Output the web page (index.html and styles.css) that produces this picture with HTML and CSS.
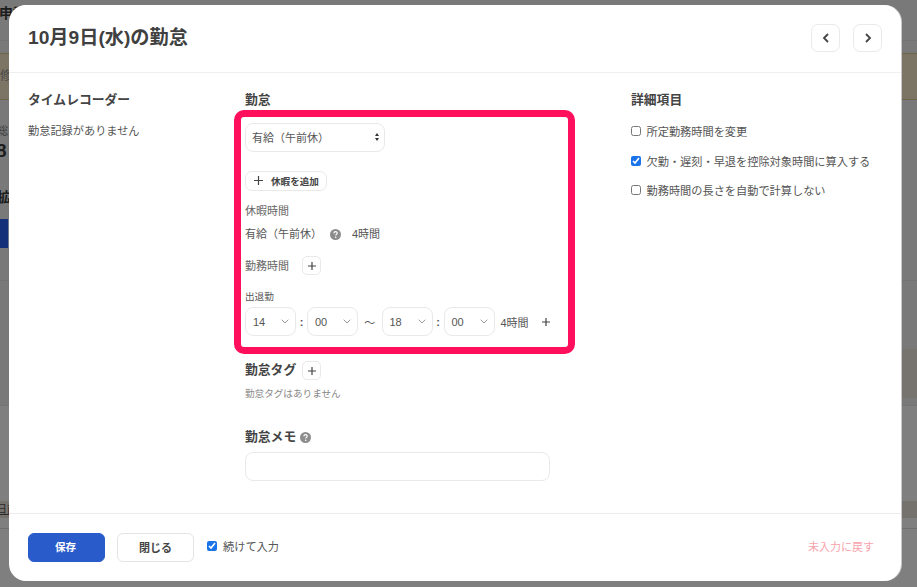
FILE: index.html
```html
<!DOCTYPE html>
<html lang="ja">
<head>
<meta charset="utf-8">
<title>10月9日(水)の勤怠</title>
<link rel="stylesheet" href="styles.css">
</head>
<body>
<div class="backdrop">
  <div class="bd-head">申請</div>
  <div class="bd-banner"><span>修</span></div>
  <div class="bd-label">総</div>
  <div class="bd-num">8</div>
  <div class="bd-sub">拡</div>
  <div class="bd-blue"></div>
  <div class="bd-section"></div>
  <div class="bd-band"></div>
  <div class="bd-lower">
    <div class="bd-row"><span>日前</span></div>
    <div class="bd-rule"></div>
  </div>
</div>

<div class="modal">
  <header class="m-head">
    <h1 class="m-title">10月9日(水)の勤怠</h1>
    <div class="m-nav">
      <button class="nav-btn"><svg width="10" height="12" viewBox="0 0 10 12"><path class="chev-bold" d="M7 2 3 6l4 4"/></svg></button>
      <button class="nav-btn"><svg width="10" height="12" viewBox="0 0 10 12"><path class="chev-bold" d="M3 2l4 4-4 4"/></svg></button>
    </div>
  </header>

  <main class="m-body">
    <section class="col">
      <h2 class="heading">タイムレコーダー</h2>
      <p class="empty-rec">勤怠記録がありません</p>
    </section>

    <section class="col col-main">
      <h2 class="heading">勤怠</h2>
      <div class="select kind">
        <span>有給（午前休）</span>
        <svg width="4" height="8" viewBox="0 0 4 8"><path class="arrows" d="M2 0 4 3H0zM2 8 0 5h4z"/></svg>
      </div>
      <button class="add-leave">
        <svg width="9" height="9" viewBox="0 0 9 9"><path class="plus" d="M4.5 0v9M0 4.5h9"/></svg>
        <span>休暇を追加</span>
      </button>
      <div class="sub-label leave-label">休暇時間</div>
      <div class="leave-row">
        <span>有給（午前休）</span>
        <svg class="help" width="11" height="11" viewBox="0 0 11 11"><circle cx="5.5" cy="5.5" r="5.5" fill="#8c8c8c"/><path d="M3.9 4.3c0-2.1 3.3-2.1 3.3-.1 0 1.2-1.5 1.2-1.5 2.4" fill="none" stroke="#fff" stroke-width="1.2"/><circle cx="5.7" cy="8.3" r=".8" fill="#fff"/></svg>
        <span>4時間</span>
      </div>
      <div class="work-row">
        <span class="sub-label">勤務時間</span>
        <button class="plus-btn"><svg width="8" height="8" viewBox="0 0 8 8"><path class="plus" d="M4 0v8M0 4h8"/></svg></button>
      </div>
      <div class="small-label">出退勤</div>
      <div class="time-row">
        <div class="select time"><span>14</span><svg width="8" height="5" viewBox="0 0 8 5"><path class="chev" d="M.7.7 4 4 7.3.7"/></svg></div>
        <span class="colon">:</span>
        <div class="select time"><span>00</span><svg width="8" height="5" viewBox="0 0 8 5"><path class="chev" d="M.7.7 4 4 7.3.7"/></svg></div>
        <span class="tilde">〜</span>
        <div class="select time"><span>18</span><svg width="8" height="5" viewBox="0 0 8 5"><path class="chev" d="M.7.7 4 4 7.3.7"/></svg></div>
        <span class="colon">:</span>
        <div class="select time"><span>00</span><svg width="8" height="5" viewBox="0 0 8 5"><path class="chev" d="M.7.7 4 4 7.3.7"/></svg></div>
        <span class="hours">4時間</span>
        <svg class="time-plus" width="8" height="8" viewBox="0 0 8 8"><path class="plus" d="M4 0v8M0 4h8"/></svg>
      </div>
      <div class="tag-row">
        <h2 class="heading tag-heading">勤怠タグ</h2>
        <button class="plus-btn"><svg width="8" height="8" viewBox="0 0 8 8"><path class="plus" d="M4 0v8M0 4h8"/></svg></button>
      </div>
      <p class="tag-empty">勤怠タグはありません</p>
      <div class="memo-head">
        <h2 class="heading">勤怠メモ</h2>
        <svg width="11" height="11" viewBox="0 0 11 11"><circle cx="5.5" cy="5.5" r="5.5" fill="#8c8c8c"/><path d="M3.9 4.3c0-2.1 3.3-2.1 3.3-.1 0 1.2-1.5 1.2-1.5 2.4" fill="none" stroke="#fff" stroke-width="1.2"/><circle cx="5.7" cy="8.3" r=".8" fill="#fff"/></svg>
      </div>
      <input class="memo" type="text">
      <div class="annotation"></div>
    </section>

    <section class="col">
      <h2 class="heading">詳細項目</h2>
      <div class="checks">
        <label class="check"><input type="checkbox"><span>所定勤務時間を変更</span></label>
        <label class="check"><input type="checkbox" checked><span>欠勤・遅刻・早退を控除対象時間に算入する</span></label>
        <label class="check"><input type="checkbox"><span>勤務時間の長さを自動で計算しない</span></label>
      </div>
    </section>
  </main>

  <footer class="m-foot">
    <button class="btn primary">保存</button>
    <button class="btn">閉じる</button>
    <label class="check cont"><input type="checkbox" checked><span>続けて入力</span></label>
    <span class="reset">未入力に戻す</span>
  </footer>
</div>
</body>
</html>
```
FILE: styles.css
```css
* { box-sizing: border-box; }
html, body { margin: 0; height: 100%; }
body {
  width: 917px;
  height: 587px;
  overflow: hidden;
  position: relative;
  background: #7f7f7f;
  color: #444;
  font-family: "Liberation Sans", "Noto Sans CJK JP", sans-serif;
  font-size: 11px;
}
h1, h2, p { margin: 0; }
button { font-family: inherit; padding: 0; background: #fff; cursor: pointer; }

/* dimmed page behind the dialog */
.backdrop { height: 587px; overflow: hidden; color: #1c1c1c; background: #797979; }
.bd-head { height: 41px; padding-top: 3px; font-size: 14px; line-height: 20px; font-weight: 700; text-indent: -1px; border-bottom: 1px solid #737373; white-space: nowrap; }
.bd-banner { margin-top: 12px; height: 47px; background: #7c7565; border-top: 1px solid #6f6547; border-bottom: 1px solid #6f6547; color: #4a4a4a; font-size: 12px; line-height: 45px; }
.bd-label { margin-top: 24px; height: 14px; line-height: 14px; font-size: 11px; color: #3a3a3a; text-indent: -3px; }
.bd-num { margin-top: 1px; height: 24px; line-height: 24px; font-size: 19px; font-weight: 700; text-indent: -4px; }
.bd-sub { margin-top: 24px; height: 20px; line-height: 20px; font-size: 14px; font-weight: 700; text-indent: -3px; }
.bd-blue { margin-top: 12px; height: 29px; width: 9px; background: #143078; border-right: 1px solid #6f7a90; }
.bd-section { margin-top: 32px; height: 1px; background: #737373; }
.bd-band { margin-top: 68px; margin-left: 880px; height: 49px; background: #77746f; }
.bd-lower { margin-top: 7px; height: 182px; border-top: 1px solid #757575; background: #7f7f7f; padding-top: 95px; }
.bd-row { height: 17px; background: #75726e; font-size: 11px; color: #2a2a2a; line-height: 17px; text-indent: -4px; }
.bd-row span { text-decoration: underline; }
.bd-rule { margin-top: 10px; height: 1px; background: #6f6f6f; }

/* dialog */
.modal {
  position: absolute;
  top: 5px;
  left: 9px;
  width: 892px;
  height: 576px;
  background: #fff;
  border-radius: 17px;
  box-shadow: 1px 0 0 #c9c9c9;
  display: flex;
  flex-direction: column;
}
.m-head {
  flex: none;
  height: 68px;
  padding: 0 19px;
  border-bottom: 1px solid #f0f0f0;
  display: flex;
  align-items: center;
  justify-content: space-between;
}
.m-title { font-size: 19.2px; font-weight: 700; line-height: 28px; color: #404040; margin-top: -1px; }
.m-nav { display: flex; gap: 13px; margin-top: -1px; }
.nav-btn {
  width: 29px;
  height: 28.5px;
  border: 1px solid #eaeaea;
  border-radius: 7px;
  display: flex;
  align-items: center;
  justify-content: center;
}
.chev-bold { fill: none; stroke: #444; stroke-width: 1.8; }

.m-body {
  flex: 1;
  padding: 18px 19px 0;
  display: grid;
  grid-template-columns: 217px 386px 1fr;
  align-content: start;
}
.col { min-width: 0; position: relative; }
.heading { font-size: 12.8px; line-height: 18px; font-weight: 700; color: #444; }
.tag-heading { padding-bottom: 2px; }
.empty-rec { margin-top: 14px; line-height: 16px; font-size: 11.2px; color: #555; }

.select {
  border: 1px solid #e9e9e9;
  border-radius: 8px;
  background: #fff;
  display: flex;
  align-items: center;
  justify-content: space-between;
  color: #555;
}
.kind { margin-top: 14px; width: 140px; height: 29px; padding: 0 5px 2px 6px; }
.arrows { fill: #333; }
.add-leave {
  margin-top: 19px;
  width: 82px;
  height: 20px;
  border: 1px solid #e9e9e9;
  border-radius: 7px;
  display: flex;
  align-items: center;
  gap: 8px;
  padding: 0 0 1px 8px;
  font-size: 9.6px;
  font-weight: 700;
  color: #444;
}
.plus { fill: none; stroke: #444; stroke-width: 1.2; }
.sub-label { font-size: 11px; line-height: 16px; color: #666; }
.leave-label { margin-top: 12px; }
.leave-row { margin-top: 7px; height: 16px; display: flex; align-items: center; line-height: 16px; color: #555; }
.help { margin-left: 8px; margin-right: 11px; }
.work-row { margin-top: 14px; height: 19px; display: flex; align-items: center; gap: 13px; }
.plus-btn {
  width: 19px;
  height: 19px;
  border: 1px solid #e9e9e9;
  border-radius: 5px;
  display: flex;
  align-items: center;
  justify-content: center;
}
.small-label { margin-top: 15px; font-size: 9.6px; line-height: 14px; color: #555; }
.time-row { margin-top: 3px; height: 29px; display: flex; align-items: center; }
.time { width: 51px; height: 29px; padding: 0 6px 0 7px; flex: none; }
.chev { fill: none; stroke: #999; stroke-width: 1; }
.colon { width: 11px; text-align: center; color: #555; font-weight: 700; }
.tilde { width: 23.5px; text-align: center; color: #555; font-size: 11px; }
.hours { margin-left: 6px; color: #555; }
.time-plus { margin-left: 13px; }
.tag-row { margin-top: 25px; height: 19px; display: flex; align-items: center; gap: 6px; }
.tag-empty { margin-top: 8px; font-size: 9.6px; line-height: 12px; color: #888; }
.memo-head { margin-top: 28px; height: 18px; display: flex; align-items: center; gap: 4px; }
.memo { display: block; margin-top: 6px; width: 305px; height: 29px; border: 1px solid #e9e9e9; border-radius: 8px; background: #fff; outline: none; }
.annotation {
  position: absolute;
  left: -11px;
  top: 19px;
  width: 341px;
  height: 244px;
  border: 7px solid #ff0f5c;
  border-radius: 10px;
}

.checks { margin-top: 14px; display: flex; flex-direction: column; gap: 13.5px; margin-left: -0.5px; }
.check { display: flex; align-items: center; gap: 6px; height: 16px; color: #555; font-size: 11.2px; }
.check input { width: 10px; height: 10px; margin: 0; flex: none; accent-color: #1a73e8; }

.m-foot {
  flex: none;
  height: 68px;
  border-top: 1px solid #ececec;
  padding: 0 27px 0 19px;
  display: flex;
  align-items: center;
}
.btn {
  width: 77px;
  height: 29px;
  border: 1px solid #e4e4e4;
  border-radius: 6px;
  margin-right: 12px;
  padding-bottom: 2px;
  font-size: 11px;
  font-weight: 700;
  color: #444;
}
.primary { background: #2a5bca; border-color: #2a5bca; color: #fff; font-size: 10.5px; padding-right: 2px; }
.cont { margin-left: 1px; margin-bottom: 3px; }
.reset { margin-left: auto; margin-bottom: 3px; color: #f7a3ab; font-size: 11px; }
```
